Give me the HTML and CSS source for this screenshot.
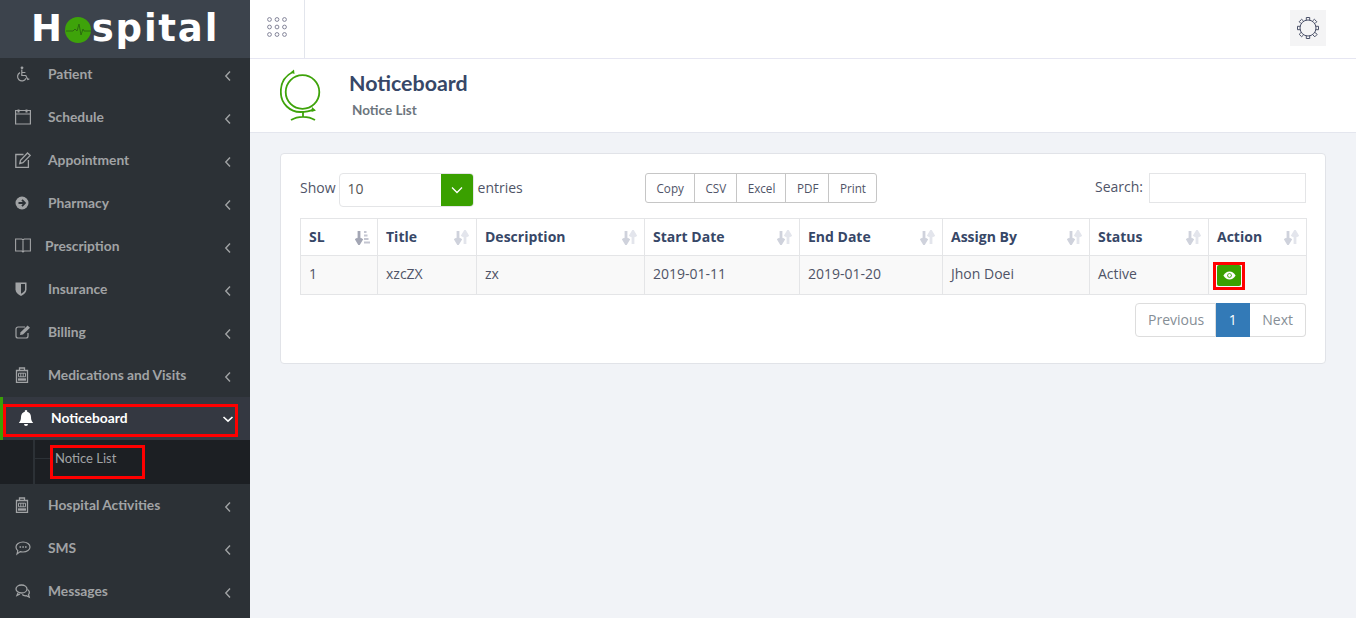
FILE: index.html
```html
<!DOCTYPE html>
<html lang="en">
<head>
  <meta charset="UTF-8">
  <title>Hospital - Noticeboard</title>
  <link rel="stylesheet" href="styles.css">
</head>
<body>
  <svg class="sprites" width="0" height="0" aria-hidden="true">
    <symbol id="chev-left" viewBox="0 0 8 12"><path d="M6 1.500 1.800 6 6 10.500" fill="none" stroke="currentColor" stroke-width="1.400"/></symbol>
    <symbol id="sort" viewBox="0 0 15 15"><path d="M4 1v11M1 8.500 4 13.500l3-5" fill="none" stroke="#cfd2dc" stroke-width="2.800"/><path d="M11 14V3M8 6.500 11 1.500l3 5" fill="none" stroke="#e3e5ec" stroke-width="2.800"/></symbol>
    <symbol id="clipboard" viewBox="0 0 16 16"><path d="M1.500 3.500h11v12h-11z" fill="none" stroke="currentColor" stroke-width="1.300"/><path d="M4.500 3.500V1h5v2.500" fill="none" stroke="currentColor" stroke-width="1.300"/><path d="M3.500 6.200h7v3.600h-7zM5.800 6v4M8.200 6v4" fill="none" stroke="currentColor" stroke-width="1"/><path d="M3 12.500h8" stroke="currentColor" stroke-width="2.400"/></symbol>
  </svg>

  <aside id="sidebar">
    <div class="logo">H<span class="logo-o"><svg viewBox="0 0 26 26" width="26" height="26"><circle cx="13" cy="13" r="13" fill="#3ea30a"/><path d="M1 14h7l2-2 2 2 2-7 2 11 2-6 1 2h7" fill="none" stroke="#2c6b10" stroke-width="1"/></svg></span>spital</div>
    <ul class="nav">
      <li class="nav-item">
        <svg class="nav-icon" viewBox="0 0 16 16"><circle cx="7" cy="1.800" r="1.400" fill="currentColor"/><path d="M6.800 3.500v6h4l2 4 1.500-.6M6.800 6.500h3.600M5 6.600a4.400 4.400 0 1 0 6 5.700" fill="none" stroke="currentColor" stroke-width="1.200"/></svg>
        <span class="nav-label">Patient</span>
        <svg class="chev"><use href="#chev-left"/></svg>
      </li>
      <li class="nav-item">
        <svg class="nav-icon" viewBox="0 0 16 16"><path d="M.6 1.500h14.800v13.500H.6zM.6 5h14.800" fill="none" stroke="currentColor" stroke-width="1.200"/><path d="M3.500 .5v3M11.500 .5v3" stroke="currentColor" stroke-width="2"/></svg>
        <span class="nav-label">Schedule</span>
        <svg class="chev"><use href="#chev-left"/></svg>
      </li>
      <li class="nav-item">
        <svg class="nav-icon" viewBox="0 0 16 16"><path d="M8.500 2.500H.8v13h12.600V8" fill="none" stroke="currentColor" stroke-width="1.300"/><path d="M4.800 11.500l.7-3.200L12.500 1l2.700 2.500-7.200 7.200z" fill="none" stroke="currentColor" stroke-width="1.300"/></svg>
        <span class="nav-label">Appointment</span>
        <svg class="chev"><use href="#chev-left"/></svg>
      </li>
      <li class="nav-item">
        <svg class="nav-icon" viewBox="0 0 16 16"><circle cx="7" cy="8" r="6.500" fill="currentColor"/><path d="M3.500 8h6M7 4.800 10 8l-3 3.200" fill="none" stroke="#2c3136" stroke-width="1.800"/></svg>
        <span class="nav-label">Pharmacy</span>
        <svg class="chev"><use href="#chev-left"/></svg>
      </li>
      <li class="nav-item nav-item-tight">
        <svg class="nav-icon" viewBox="0 0 16 16"><path d="M.6 1h6.200l1.200 1 1.200-1h6.200v12H9.200L8 14l-1.200-1H.6zM8 2v11.500" fill="none" stroke="currentColor" stroke-width="1.100"/></svg>
        <span class="nav-label">Prescription</span>
        <svg class="chev"><use href="#chev-left"/></svg>
      </li>
      <li class="nav-item">
        <svg class="nav-icon" viewBox="0 0 16 16"><path d="M.5 1.500h11v7c0 3-2.500 5-5.500 6.500-3-1.500-5.500-3.500-5.500-6.500z" fill="currentColor"/><path d="M6 3h4v5.500c0 1.800-1.800 3-4 4.300z" fill="#2c3136"/></svg>
        <span class="nav-label">Insurance</span>
        <svg class="chev"><use href="#chev-left"/></svg>
      </li>
      <li class="nav-item">
        <svg class="nav-icon" viewBox="0 0 16 16"><path d="M10 3H3a2 2 0 0 0-2 2v7a2 2 0 0 0 2 2h8a2 2 0 0 0 2-2V9" fill="none" stroke="currentColor" stroke-width="1.200"/><path d="M5 11l.6-2.800L12.600 1.500 15 3.800 8 10.500z" fill="currentColor"/></svg>
        <span class="nav-label">Billing</span>
        <svg class="chev"><use href="#chev-left"/></svg>
      </li>
      <li class="nav-item">
        <svg class="nav-icon"><use href="#clipboard"/></svg>
        <span class="nav-label">Medications and Visits</span>
        <svg class="chev"><use href="#chev-left"/></svg>
      </li>
      <li class="nav-item nav-item-active">
        <svg class="nav-icon" viewBox="0 0 16 16"><path d="M8 0a1.300 1.300 0 0 1 1.200 1.700C11.500 2.300 13 4.300 13 7c0 3 .8 4.500 2.200 6H.8C2.200 11.500 3 10 3 7c0-2.700 1.500-4.700 3.800-5.300A1.300 1.300 0 0 1 8 0zM6 14h4a2 2 0 0 1-4 0z" fill="currentColor"/></svg>
        <span class="nav-label">Noticeboard</span>
        <svg class="chev" viewBox="0 0 12 8"><path d="M1.500 2 6 6.200 10.500 2" fill="none" stroke="currentColor" stroke-width="1.600"/></svg>
        <span class="red-box red-box-nav"></span>
      </li>
      <li class="subnav">
        <span class="tree-tick"></span>
        <span class="subnav-link">Notice List</span>
        <span class="red-box red-box-sub"></span>
      </li>
      <li class="nav-item">
        <svg class="nav-icon"><use href="#clipboard"/></svg>
        <span class="nav-label">Hospital Activities</span>
        <svg class="chev"><use href="#chev-left"/></svg>
      </li>
      <li class="nav-item">
        <svg class="nav-icon" viewBox="0 0 16 16"><path d="M8 2c4 0 7 2.200 7 5s-3 5-7 5c-1 0-2-.1-2.800-.4L2 14l.8-3.200C1.600 9.800 1 8.500 1 7c0-2.800 3-5 7-5z" fill="none" stroke="currentColor" stroke-width="1.200"/><path d="M4.500 7h1.600M7.300 7h1.600M10 7h1.600" stroke="currentColor" stroke-width="1.600"/></svg>
        <span class="nav-label">SMS</span>
        <svg class="chev"><use href="#chev-left"/></svg>
      </li>
      <li class="nav-item">
        <svg class="nav-icon" viewBox="0 0 16 16"><ellipse cx="6.500" cy="6" rx="5.500" ry="4" fill="none" stroke="currentColor" stroke-width="1.300"/><path d="M3 10l-1 2.500 3-1.500M12.500 6.500c2 1 2.500 3.500 1 5l.7 2.500-3-1.300c-1.500.3-3-.2-4-1.200" fill="none" stroke="currentColor" stroke-width="1.300"/></svg>
        <span class="nav-label">Messages</span>
        <svg class="chev"><use href="#chev-left"/></svg>
      </li>
    </ul>
  </aside>

  <main id="main">
    <header class="topbar">
      <div class="menu-toggle">
        <svg viewBox="0 0 20 20" width="20" height="20" fill="none" stroke="#77788f" stroke-width="0.900">
          <circle cx="2.500" cy="2.500" r="1.900"/><circle cx="10" cy="2.500" r="1.900"/><circle cx="17.500" cy="2.500" r="1.900"/>
          <circle cx="2.500" cy="10" r="1.900"/><circle cx="10" cy="10" r="1.900"/><circle cx="17.500" cy="10" r="1.900"/>
          <circle cx="2.500" cy="17.500" r="1.900"/><circle cx="10" cy="17.500" r="1.900"/><circle cx="17.500" cy="17.500" r="1.900"/>
        </svg>
      </div>
      <div class="settings">
        <svg viewBox="0 0 24 24" width="24" height="24" fill="none" stroke="#4a5068" stroke-width="1">
          <circle cx="12" cy="12" r="8" fill="#f4f4f5"/>
          <path d="M10.300 4.200V1.500h3.400v2.700M10.300 19.800v2.700h3.400v-2.700M4.200 10.300H1.500v3.400h2.700M19.800 10.300h2.700v3.400h-2.700M5 7.500 3.200 5.700l2.400-2.400L7.500 5M17 19l1.800 1.800 2.400-2.400L19 16.500M19 7.500l1.800-1.800-2.400-2.400L16.500 5M5 16.500l-1.800 1.800 2.400 2.400L7.500 19"/>
        </svg>
      </div>
    </header>

    <section class="page-head">
      <svg class="page-icon" viewBox="0 0 44 54" width="44" height="54" fill="none" stroke="#3ea30a" stroke-width="1.800">
        <circle cx="22.500" cy="23" r="16.800"/>
        <path d="M13 3C4.500 7 .8 15 .8 23c0 12 9.500 20 19.500 20 5 0 9-.5 13-2.500"/>
        <path d="M10.500 3.500 14 .5l.5 4.500zM32 38l4 3.500-4.500 1.500z" fill="#3ea30a" stroke="none"/>
        <path d="M23 43v5.500M11 51c4-2.500 8-3.200 12-3.200s8 .7 12 3.200" stroke-width="1.800"/>
      </svg>
      <div>
        <h1>Noticeboard</h1>
        <p class="page-sub">Notice List</p>
      </div>
    </section>

    <section class="content">
      <div class="card">
        <div class="table-tools">
          <label class="length">Show
            <span class="select"><span class="select-val">10</span><span class="select-btn"><svg viewBox="0 0 12 8" width="12" height="8"><path d="M1 1.500 6 6.500 11 1.500" fill="none" stroke="#fff" stroke-width="1.300"/></svg></span></span>
            entries</label>
          <div class="btn-group">
            <a class="tool-btn">Copy</a><a class="tool-btn">CSV</a><a class="tool-btn">Excel</a><a class="tool-btn">PDF</a><a class="tool-btn">Print</a>
          </div>
          <label class="search">Search: <input type="text"></label>
        </div>

        <table class="data-table">
          <colgroup>
            <col class="c-sl"><col class="c-title"><col class="c-desc"><col class="c-start"><col class="c-end"><col class="c-by"><col class="c-status"><col class="c-action">
          </colgroup>
          <thead>
            <tr>
              <th>SL<svg class="sort" viewBox="0 0 15 15"><path d="M4 1v11M1 8.500 4 13.500l3-5" fill="none" stroke="#a3a6b4" stroke-width="2.800"/><path d="M9 2h2.500M9 5.500h3.500M9 9h4.500M9 12.500h6" stroke="#c4c6d1" stroke-width="2.200"/></svg></th>
              <th>Title<svg class="sort"><use href="#sort"/></svg></th>
              <th>Description<svg class="sort"><use href="#sort"/></svg></th>
              <th>Start Date<svg class="sort"><use href="#sort"/></svg></th>
              <th>End Date<svg class="sort"><use href="#sort"/></svg></th>
              <th>Assign By<svg class="sort"><use href="#sort"/></svg></th>
              <th>Status<svg class="sort"><use href="#sort"/></svg></th>
              <th>Action<svg class="sort"><use href="#sort"/></svg></th>
            </tr>
          </thead>
          <tbody>
            <tr>
              <td>1</td>
              <td>xzcZX</td>
              <td>zx</td>
              <td>2019-01-11</td>
              <td>2019-01-20</td>
              <td>Jhon Doei</td>
              <td>Active</td>
              <td class="action-cell">
                <a class="view-btn"><svg viewBox="0 0 16 11" width="13" height="9"><path d="M.5 5.500C2.500 2 5 .5 8 .5s5.500 1.500 7.500 5c-2 3.500-4.500 5-7.500 5s-5.500-1.500-7.500-5z" fill="#fff"/><circle cx="8" cy="5.500" r="2.800" fill="#3ea30a"/><circle cx="8" cy="5.500" r="1.700" fill="#fff"/></svg></a>
                <span class="red-box red-box-action"></span>
              </td>
            </tr>
          </tbody>
        </table>

        <div class="pager">
          <a class="page-link">Previous</a><a class="page-link page-current">1</a><a class="page-link">Next</a>
        </div>
      </div>
    </section>
  </main>
</body>
</html>
```

FILE: styles.css
```css
* {
  box-sizing: border-box;
}
html, body {
  height: 100%;
}
body {
  margin: 0;
  display: flex;
  overflow: hidden;
  background-color: #f1f3f7;
  color: #4f5467;
  font-family: "Open Sans", sans-serif;
  font-size: 14px;
}
.sprites {
  position: absolute;
}

/* sidebar */
#sidebar {
  flex: 0 0 250px;
  height: 618px;
  overflow: hidden;
  background-color: #2c3136;
}
.logo {
  position: relative;
  z-index: 1;
  height: 58px;
  padding-left: 31px;
  background-color: #3c434c;
  color: #fff;
  font-family: "DejaVu Sans", sans-serif;
  font-size: 37px;
  font-weight: 700;
  line-height: 58px;
  letter-spacing: 1.800px;
  white-space: nowrap;
}
.logo-o {
  display: inline-block;
  width: 26px;
  height: 26px;
  margin: 0 1px;
  vertical-align: -2px;
}
.logo-o svg {
  display: block;
}
.nav {
  list-style: none;
  margin: -5px 0 0;
  padding: 0;
}
.nav-item {
  position: relative;
  display: flex;
  align-items: center;
  height: 43px;
  padding: 0 18px 2px 15px;
  color: #a1a3a5;
  font-family: "Lato", sans-serif;
  font-size: 13.800px;
  font-weight: 700;
}
.nav-icon {
  flex: 0 0 16px;
  width: 16px;
  height: 16px;
  margin-right: 17px;
}
.nav-item-tight .nav-icon {
  margin-right: 14px;
}
.nav-label {
  flex: 1;
}
.chev {
  width: 8px;
  height: 12px;
  margin-top: 4px;
}
.nav-item-active {
  padding-left: 15px;
  border-left: 3px solid #3a9e06;
  background-color: #343841;
  color: #fff;
}
.nav-item-active .chev {
  width: 12px;
  height: 8px;
  margin: 2px -2px 0 0;
}
.subnav {
  position: relative;
  height: 44px;
  padding: 10px 0 0 55px;
  background-color: #1c1f23;
  color: #a1a3a5;
  font-family: "Lato", sans-serif;
  font-size: 13px;
}
.subnav::before {
  content: '';
  position: absolute;
  left: 33px;
  top: 0;
  bottom: 0;
  width: 2px;
  background-color: #2c3136;
}
.tree-tick {
  position: absolute;
  left: 35px;
  top: 18px;
  width: 16px;
  height: 1px;
  background-color: #2c3136;
}
.red-box {
  position: absolute;
  border: 3px solid #f00;
  pointer-events: none;
}
.red-box-nav {
  left: 0;
  top: 7px;
  width: 235px;
  height: 33px;
}
.red-box-sub {
  left: 50px;
  top: 5px;
  width: 95px;
  height: 34px;
}
.red-box-action {
  left: 4px;
  top: 6px;
  width: 32px;
  height: 28px;
}

/* top */
#main {
  flex: 1;
  min-width: 0;
}
.topbar {
  display: flex;
  justify-content: space-between;
  align-items: center;
  height: 59px;
  padding-right: 30px;
  background-color: #fff;
  border-bottom: 1px solid #e6e6f2;
}
.menu-toggle {
  display: flex;
  align-items: center;
  justify-content: center;
  width: 55px;
  height: 58px;
  padding: 0 1px 4px 0;
  border-right: 1px solid #e2e5ec;
}
.settings {
  display: flex;
  align-items: center;
  justify-content: center;
  width: 36px;
  height: 36px;
  margin-bottom: 2px;
  background-color: #f4f4f5;
}
.page-head {
  display: flex;
  align-items: center;
  height: 74px;
  padding-left: 30px;
  background-color: #fff;
  border-bottom: 1px solid #e4e6ee;
}
.page-icon {
  margin-right: 25px;
}
h1 {
  margin: 0 0 5px;
  color: #374767;
  font-family: "Lato", sans-serif;
  font-size: 21.400px;
  font-weight: 700;
  line-height: 26px;
}
.page-sub {
  margin: 0 0 2px 3px;
  color: #6c757d;
  font-family: "Lato", sans-serif;
  font-size: 13.500px;
  font-weight: 700;
  line-height: 18px;
}

/* card */
.content {
  padding: 20px 30px;
}
.card {
  height: 211px;
  padding: 19px;
  background-color: #fff;
  border: 1px solid #e1e3e8;
  border-radius: 4px;
}
.table-tools {
  display: flex;
  align-items: flex-start;
  height: 45px;
}
.length {
  display: flex;
  align-items: flex-start;
  width: 345px;
  height: 34px;
  line-height: 30px;
}
.select {
  display: flex;
  width: 135px;
  height: 34px;
  margin: 0 4px 0 3px;
  border: 1px solid #e4e5e7;
  border-radius: 4px;
  overflow: hidden;
  color: #555;
}
.select-val {
  flex: 1;
  padding-left: 8px;
  line-height: 30px;
}
.select-btn {
  display: flex;
  align-items: center;
  justify-content: center;
  width: 33px;
  margin: -1px;
  background-color: #3aa000;
}
.btn-group {
  display: flex;
  height: 30px;
  border: 1px solid #c6c6c6;
  border-radius: 3px;
}
.tool-btn {
  padding: 0 10px 0 10.500px;
  color: #4f5467;
  font-size: 11.700px;
  line-height: 28px;
  border-right: 1px solid #c6c6c6;
}
.tool-btn:last-child {
  border-right: 0;
}
.search {
  display: flex;
  align-items: flex-start;
  gap: 6px;
  margin-left: auto;
  height: 30px;
  line-height: 28px;
}
.search input {
  width: 157px;
  height: 30px;
  margin: 0;
  border: 1px solid #e4e5e7;
  background-color: #fff;
}

/* table */
.data-table {
  width: 1006px;
  table-layout: fixed;
  border-collapse: collapse;
}
.c-sl { width: 77px; }
.c-title { width: 99px; }
.c-desc { width: 168px; }
.c-start { width: 155px; }
.c-end { width: 143px; }
.c-by { width: 147px; }
.c-status { width: 119px; }
.c-action { width: 98px; }
.data-table th,
.data-table td {
  border: 1px solid #e4e5e7;
  text-align: left;
}
.data-table th {
  position: relative;
  height: 37px;
  padding: 0 8px 2px;
  color: #374767;
  font-weight: 700;
}
.data-table td {
  height: 39px;
  padding: 0 8px 3px;
  background-color: #f9f9f9;
}
.sort {
  position: absolute;
  right: 7px;
  top: 11px;
  width: 15px;
  height: 15px;
}
.action-cell {
  position: relative;
}
.data-table .action-cell {
  padding: 0;
}
.view-btn {
  display: flex;
  align-items: center;
  justify-content: center;
  width: 24px;
  height: 21px;
  margin: 0 0 0 8px;
  background-color: #3aa000;
  border-radius: 2px;
}
.pager {
  display: flex;
  justify-content: flex-end;
  margin-top: 8px;
}
.page-link {
  height: 34px;
  padding: 0 12px;
  background-color: #fff;
  border: 1px solid #ddd;
  border-left: 0;
  color: #868e96;
  line-height: 32px;
}
.page-link:first-child {
  padding-right: 11px;
  border-left: 1px solid #ddd;
  border-radius: 4px 0 0 4px;
}
.page-link:last-child {
  border-radius: 0 4px 4px 0;
}
.page-current {
  width: 34px;
  padding: 0;
  background-color: #337ab7;
  border-color: #337ab7;
  color: #fff;
  text-align: center;
}
```
